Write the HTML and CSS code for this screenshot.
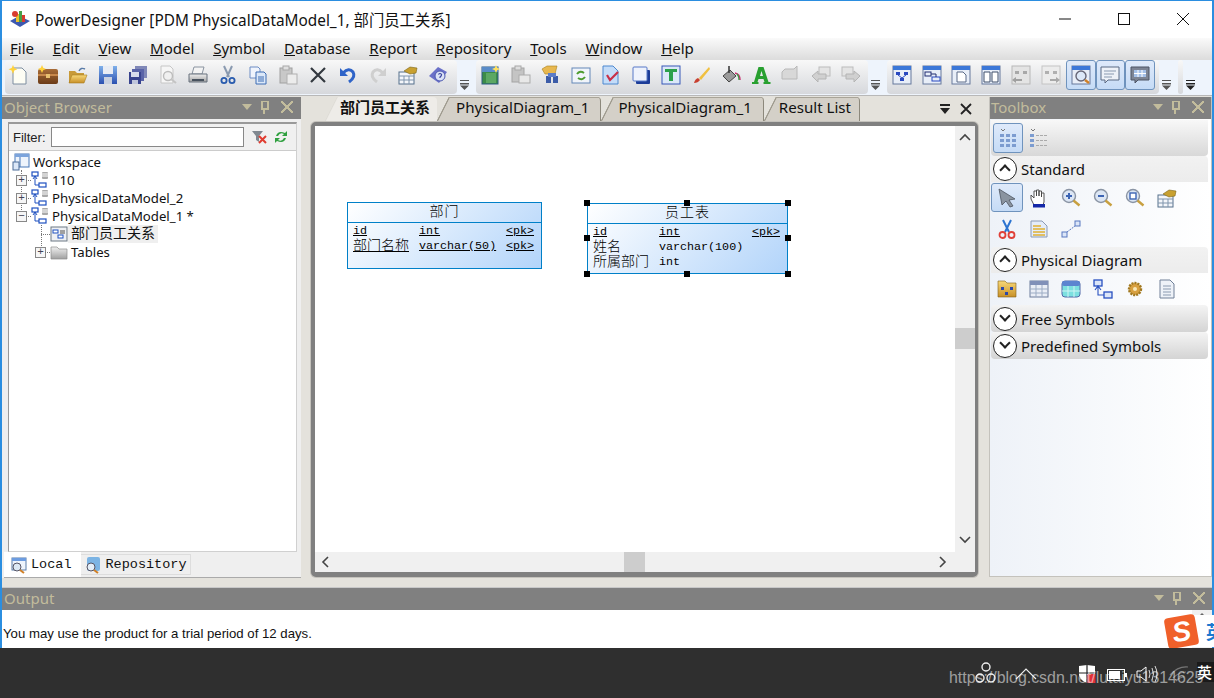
FILE: index.html
```html
<!DOCTYPE html>
<html lang="zh">
<head>
    <meta charset="UTF-8">
    <title>PowerDesigner</title>
    <link rel="stylesheet" href="styles.css">
</head>
<body>

<svg class="sprite" width="0" height="0">
    <defs>
        <linearGradient id="gBlue" x1="0" y1="0" x2="0" y2="1"><stop offset="0" stop-color="#7fb0ea"/><stop offset="1" stop-color="#2b50b0"/></linearGradient>
        <linearGradient id="gGold" x1="0" y1="0" x2="0" y2="1"><stop offset="0" stop-color="#f8d878"/><stop offset="1" stop-color="#c89028"/></linearGradient>
        <linearGradient id="gGrey" x1="0" y1="0" x2="0" y2="1"><stop offset="0" stop-color="#f0f0f0"/><stop offset="1" stop-color="#a0a0a0"/></linearGradient>
        <linearGradient id="gBrown" x1="0" y1="0" x2="0" y2="1"><stop offset="0" stop-color="#a86c38"/><stop offset="1" stop-color="#6c3c18"/></linearGradient>

        <symbol id="i-new" viewBox="0 0 20 20"><path d="M5 3h9l4 4v12H5z" fill="#fdfdf4" stroke="#7d8da0"/><path d="M5 0l1.300 3 3 1.300-3 1.300L5 9 3.700 5.600 .5 4.300l3.200-1.300z" fill="#ffd23c"/></symbol>
        <symbol id="i-case" viewBox="0 0 20 20"><rect x="0" y="4" width="20" height="15" rx="2" fill="url(#gBrown)"/><rect x="0" y="9" width="20" height="2" fill="#c8884c"/><rect x="8" y="9" width="4" height="4" fill="#e8c070"/><path d="M4 0l1.200 2.800 2.800 1.200-2.800 1.200L4 8 2.800 5.200 0 4l2.800-1.200z" fill="#ffd23c"/></symbol>
        <symbol id="i-open" viewBox="0 0 20 20"><path d="M1 6h6l2 2h7v10H1z" fill="#c89a38"/><path d="M1 18l3-8h15l-3 8z" fill="url(#gGold)" stroke="#a87c20" stroke-width=".6"/><path d="M11 6q2-4 6-2" fill="none" stroke="#5a7ca8" stroke-width="1.400"/></symbol>
        <symbol id="i-save" viewBox="0 0 20 20"><rect x="1" y="1" width="18" height="18" fill="url(#gBlue)"/><rect x="5" y="1" width="10" height="8" fill="#e8ecf4"/><rect x="6" y="12" width="8" height="7" fill="#c8d0e0"/></symbol>
        <symbol id="i-saveall" viewBox="0 0 20 20"><rect x="7" y="1" width="12" height="12" fill="#8088b8"/><rect x="4" y="4" width="12" height="12" fill="#5a64a8"/><rect x="1" y="7" width="12" height="12" fill="#39448f"/><rect x="3" y="7" width="8" height="5" fill="#d8dcec"/><rect x="4" y="15" width="6" height="4" fill="#c0c6dc"/></symbol>
        <symbol id="i-preview" viewBox="0 0 20 20"><path d="M3 1h9l3 3v14H3z" fill="#f6f6f6" stroke="#c6c6c6"/><circle cx="10" cy="11" r="4.500" fill="#f0f0f0" stroke="#bcbcbc" stroke-width="1.400"/><path d="M13 14l5 4" stroke="#c4c4c4" stroke-width="2"/></symbol>
        <symbol id="i-print" viewBox="0 0 20 20"><path d="M6 2h10l-2 7H4z" fill="#f4f4f4" stroke="#8a94a0"/><path d="M1 9h18v8H1z" fill="url(#gGrey)" stroke="#66707c"/><rect x="4" y="14" width="12" height="2" fill="#48525e"/></symbol>
        <symbol id="i-cut" viewBox="0 0 20 20"><path d="M6 1l5 11M14 1L9 12" stroke="#8a9ab0" stroke-width="2"/><circle cx="6" cy="15.500" r="2.600" fill="none" stroke="#2a5cae" stroke-width="1.800"/><circle cx="14" cy="15.500" r="2.600" fill="none" stroke="#2a5cae" stroke-width="1.800"/></symbol>
        <symbol id="i-copy" viewBox="0 0 20 20"><path d="M2 2h8l2 2v9H2z" fill="#f0f4fc" stroke="#6c8cc4"/><path d="M8 7h8l2 2v10H8z" fill="#dce8f8" stroke="#3c6cb4"/><path d="M10 12h6M10 14h6M10 16h6" stroke="#3c6cb4"/></symbol>
        <symbol id="i-paste" viewBox="0 0 20 20"><rect x="2" y="3" width="12" height="15" fill="#c8c8c8" stroke="#a0a0a0"/><rect x="5" y="1" width="6" height="4" fill="#e0e0e0" stroke="#a8a8a8"/><rect x="9" y="9" width="10" height="10" fill="#ececec" stroke="#b0b0b0"/></symbol>
        <symbol id="i-del" viewBox="0 0 20 20"><path d="M3 3l14 14M17 3L3 17" stroke="#33383f" stroke-width="2.200"/></symbol>
        <symbol id="i-undo" viewBox="0 0 20 20"><path d="M5 8q6-6 10-1 3 5-4 10" fill="none" stroke="#2f64c8" stroke-width="3"/><path d="M2 3v8h8z" fill="#2f64c8"/></symbol>
        <symbol id="i-redo" viewBox="0 0 20 20"><path d="M15 8q-6-6-10-1-3 5 4 10" fill="none" stroke="#cfcfcf" stroke-width="3"/><path d="M18 3v8h-8z" fill="#cfcfcf"/></symbol>
        <symbol id="i-props" viewBox="0 0 20 20"><rect x="1" y="7" width="15" height="12" fill="#f4f6fa" stroke="#56708c"/><path d="M1 11h15M6 11v8M11 11v8M1 15h15" stroke="#7e94ac"/><path d="M6 6l6-4 7 1-1 5-6 1z" fill="#c8a030" stroke="#7c6418" stroke-width=".6"/></symbol>
        <symbol id="i-help" viewBox="0 0 20 20"><path d="M1 11l9-9 9 5-8 11z" fill="#6a70c8"/><circle cx="12" cy="11" r="5" fill="#dbe2f6" stroke="#4c58b0"/><path d="M10.400 9.500q1.600-2 3.200 0 0 1.500-1.600 2.500v1" fill="none" stroke="#3c48a0" stroke-width="1.200"/></symbol>

        <symbol id="i-entity" viewBox="0 0 20 20"><rect x="1" y="2" width="16" height="17" fill="#3c8c48" stroke="#2c5a84"/><rect x="1" y="2" width="16" height="5" fill="#5a8cc8"/><rect x="5" y="8" width="10" height="10" fill="#5ca864"/><path d="M15 0l1.200 2.800L19 4l-2.800 1.200L15 8l-1.200-2.800L11 4l2.800-1.200z" fill="#ffe060"/></symbol>
        <symbol id="i-paste2" viewBox="0 0 20 20"><rect x="1" y="3" width="12" height="14" fill="#c4c4c4" stroke="#a4a4a4"/><rect x="4" y="1" width="6" height="4" fill="#dedede" stroke="#a8a8a8"/><rect x="8" y="10" width="11" height="8" fill="#e8e8e8" stroke="#ababab"/></symbol>
        <symbol id="i-find" viewBox="0 0 20 20"><path d="M1 4l5-3h10l-2 8H4z" fill="#e8b850" stroke="#a8801c" stroke-width=".6"/><rect x="5" y="11" width="5" height="7" fill="#3c5ca8"/><rect x="12" y="11" width="5" height="7" fill="#3c5ca8"/><rect x="7" y="8" width="8" height="4" fill="#5c7cc8"/></symbol>
        <symbol id="i-refresh" viewBox="0 0 20 20"><rect x="1" y="3" width="18" height="15" fill="#f0f4fa" stroke="#6488b8"/><path d="M6 9q3-4 7-1M14 12q-3 4-7 1" fill="none" stroke="#4c9c30" stroke-width="2"/></symbol>
        <symbol id="i-check" viewBox="0 0 20 20"><path d="M2 1h10l5 5v13H2z" fill="#c4dcf8" stroke="#4c88d0"/><path d="M6 10l3 5 8-8" fill="none" stroke="#c83048" stroke-width="2.200"/></symbol>
        <symbol id="i-shadow" viewBox="0 0 20 20"><rect x="5" y="5" width="14" height="14" rx="1" fill="#1c3c98"/><rect x="2" y="2" width="14" height="14" rx="1" fill="#eef2fc" stroke="#5678c8"/></symbol>
        <symbol id="i-text" viewBox="0 0 20 20"><rect x="1" y="1" width="18" height="18" fill="#dce8f8" stroke="#3858b8"/><path d="M4 4h12v3h-4v9h-4V7H4z" fill="#2ca04c"/></symbol>
        <symbol id="i-brush" viewBox="0 0 20 20"><path d="M18 2L8 13l2 2L19 4z" fill="#f0c040"/><path d="M7 13q-3 1-4 5 4 0 6-3z" fill="#c84030"/></symbol>
        <symbol id="i-fill" viewBox="0 0 20 20"><path d="M2 11l7-6 6 6-7 6z" fill="#9a9a9a" stroke="#444"/><path d="M8 1v7" stroke="#333" stroke-width="1.500"/><path d="M14 8q5 1 5 7" fill="none" stroke="#c83070" stroke-width="1.500"/><path d="M16 9q2 2 2 6" fill="none" stroke="#30a040" stroke-width="1.200"/></symbol>
        <symbol id="i-font" viewBox="0 0 20 20"><path d="M7.500 2h5l5 15h2v2h-7v-2h1l-1-3H7.500l-1 3h1v2H1v-2h2zM9 11h3l-1.500-5z" fill="#28a030"/></symbol>
        <symbol id="i-g1" viewBox="0 0 20 20"><path d="M1 7l3-3h9l3-3v13H1z" fill="#d8d8d8" stroke="#b8b8b8"/></symbol>
        <symbol id="i-back" viewBox="0 0 20 20"><rect x="8" y="2" width="11" height="9" fill="#e4e4e4" stroke="#bcbcbc"/><path d="M1 11l6-5v3h8v5H7v3z" fill="#d0d0d0" stroke="#b4b4b4"/></symbol>
        <symbol id="i-fwd" viewBox="0 0 20 20"><rect x="1" y="2" width="11" height="9" fill="#e4e4e4" stroke="#bcbcbc"/><path d="M19 11l-6-5v3H5v5h8v3z" fill="#d0d0d0" stroke="#b4b4b4"/></symbol>

        <symbol id="i-win" viewBox="0 0 20 20"><rect x="1" y="1" width="18" height="18" fill="#e8eef8" stroke="#66789c"/><rect x="1" y="1" width="18" height="4" fill="#3c78d8"/></symbol>
        <symbol id="i-v1" viewBox="0 0 20 20"><use href="#i-win"/><rect x="4" y="7" width="4" height="3" fill="#2848c0"/><rect x="12" y="7" width="4" height="3" fill="#2848c0"/><rect x="8" y="13" width="4" height="3" fill="#2848c0"/><path d="M6 10l4 3 4-3" fill="none" stroke="#2848c0"/></symbol>
        <symbol id="i-v2" viewBox="0 0 20 20"><use href="#i-win"/><rect x="3" y="7" width="6" height="4" fill="none" stroke="#202c70"/><rect x="10" y="12" width="8" height="4" fill="none" stroke="#2848c0"/><path d="M9 9h5v3" fill="none" stroke="#202c70"/></symbol>
        <symbol id="i-v3" viewBox="0 0 20 20"><use href="#i-win"/><path d="M6 7h6l3 3v7H6z" fill="#fff" stroke="#5a6a88"/></symbol>
        <symbol id="i-v4" viewBox="0 0 20 20"><use href="#i-win"/><path d="M3 7h6v10H3zM11 7h6v10h-6z" fill="#fff" stroke="#40506c"/></symbol>
        <symbol id="i-v5" viewBox="0 0 20 20"><rect x="1" y="1" width="18" height="18" fill="#e4e4e4" stroke="#b8b8b8"/><rect x="4" y="6" width="4" height="3" fill="#a8a8a8"/><rect x="12" y="6" width="4" height="3" fill="#a8a8a8"/><path d="M1 15l4-3v2h6v2H5v2z" fill="#a0a0a0"/></symbol>
        <symbol id="i-v6" viewBox="0 0 20 20"><rect x="1" y="1" width="18" height="18" fill="#ececec" stroke="#c4c4c4"/><rect x="4" y="6" width="4" height="3" fill="#b0b0b0"/><rect x="12" y="6" width="4" height="3" fill="#b0b0b0"/><path d="M19 15l-4-3v2H9v2h6v2z" fill="#a8a8a8"/></symbol>
        <symbol id="i-lens" viewBox="0 0 20 20"><use href="#i-win"/><circle cx="10" cy="11" r="5" fill="#dce8f8" stroke="#667" stroke-width="1.400"/><path d="M14 15l4 3" stroke="#d08028" stroke-width="2.400"/></symbol>
        <symbol id="i-note" viewBox="0 0 20 20"><path d="M1 2h18v13H8l-3 3v-3H1z" fill="#eef2f8" stroke="#5a6a84"/><path d="M4 6h12M4 9h10M4 12h8" stroke="#8a9ab0"/></symbol>
        <symbol id="i-grid" viewBox="0 0 20 20"><path d="M1 2h18v13H8l-3 3v-3H1z" fill="#7c8494" stroke="#4c5464"/><rect x="4" y="5" width="12" height="7" fill="#a4c0e8"/><path d="M8 5v7M12 5v7M4 8.500h12" stroke="#fff"/></symbol>

        <symbol id="i-vgrid" viewBox="0 0 20 20"><path d="M3 1l2 2 2-2" stroke="#777" fill="none"/><g fill="#7c9cd0"><rect x="2" y="6" width="4" height="3"/><rect x="8" y="6" width="4" height="3"/><rect x="14" y="6" width="4" height="3"/><rect x="2" y="11" width="4" height="3"/><rect x="8" y="11" width="4" height="3"/><rect x="14" y="11" width="4" height="3"/><rect x="2" y="16" width="4" height="3"/><rect x="8" y="16" width="4" height="3"/><rect x="14" y="16" width="4" height="3"/></g></symbol>
        <symbol id="i-vlist" viewBox="0 0 20 20"><path d="M3 1l2 2 2-2" stroke="#777" fill="none"/><g fill="#7c9cd0"><rect x="2" y="6" width="4" height="3"/><rect x="2" y="11" width="4" height="3"/><rect x="2" y="16" width="4" height="3"/></g><path d="M8 7.500h11M8 12.500h11M8 17.500h11" stroke="#aaa" stroke-dasharray="3 1"/></symbol>
        <symbol id="i-arrow" viewBox="0 0 20 20"><path d="M2 1l16 10-6 1 4 6-3 1-4-6-4 4z" fill="#8a94a0" stroke="#4c5460" stroke-width=".8"/></symbol>
        <symbol id="i-hand" viewBox="0 0 20 20"><path d="M2 11V7l3 3V3h2.500v5-6h2.500v6-5h2.500v6-4H15v9l-1 3H5z" fill="#fff" stroke="#444" stroke-width=".9"/><rect x="4" y="16" width="12" height="3.500" fill="#1428a8"/></symbol>
        <symbol id="i-zin" viewBox="0 0 20 20"><circle cx="8" cy="8" r="6.500" fill="#dce6f4" stroke="#8a94a4" stroke-width="1.400"/><path d="M5 8h6M8 5v6" stroke="#3c64b4" stroke-width="2"/><path d="M12.500 12.500l6 5" stroke="#c8a040" stroke-width="2.400"/></symbol>
        <symbol id="i-zout" viewBox="0 0 20 20"><circle cx="8" cy="8" r="6.500" fill="#dce6f4" stroke="#8a94a4" stroke-width="1.400"/><path d="M5 8h6" stroke="#3c64b4" stroke-width="2"/><path d="M12.500 12.500l6 5" stroke="#c8a040" stroke-width="2.400"/></symbol>
        <symbol id="i-zfit" viewBox="0 0 20 20"><circle cx="8" cy="8" r="6.500" fill="#dce6f4" stroke="#8a94a4" stroke-width="1.400"/><rect x="5" y="5" width="6" height="6" fill="#fff" stroke="#3c64b4" stroke-width="1.400"/><path d="M12.500 12.500l6 5" stroke="#c8a040" stroke-width="2.400"/></symbol>
        <symbol id="i-rcut" viewBox="0 0 20 20"><path d="M6 1l6 12M14 1L8 13" stroke="#2c74d0" stroke-width="2"/><circle cx="5.500" cy="16" r="3" fill="none" stroke="#e04038" stroke-width="1.800"/><circle cx="14.500" cy="16" r="3" fill="none" stroke="#e04038" stroke-width="1.800"/></symbol>
        <symbol id="i-memo" viewBox="0 0 20 20"><path d="M2 2h11l5 5v11H2z" fill="#e4ecf8" stroke="#8a9ab4"/><path d="M4 7h8M4 10h12M4 13h12M4 16h12" stroke="#e0b030" stroke-width="1.600"/></symbol>
        <symbol id="i-link" viewBox="0 0 20 20"><rect x="1" y="13" width="5" height="5" fill="#dce6f8" stroke="#5878c0"/><rect x="14" y="2" width="5" height="5" fill="#dce6f8" stroke="#5878c0"/><path d="M6 13l8-6" stroke="#5878c0" stroke-dasharray="2 1"/></symbol>
        <symbol id="i-pkg" viewBox="0 0 20 20"><path d="M1 2h7l2 2h9v14H1z" fill="url(#gGold)" stroke="#806018" stroke-width=".6"/><rect x="4" y="8" width="3" height="3" fill="#2c48a8"/><rect x="13" y="8" width="3" height="3" fill="#2c48a8"/><rect x="8" y="13" width="3" height="3" fill="#2c48a8"/></symbol>
        <symbol id="i-table" viewBox="0 0 20 20"><rect x="1" y="2" width="18" height="16" fill="#eaeef6" stroke="#6c7c9c"/><rect x="1" y="2" width="18" height="4" fill="#8090b8"/><path d="M7 6v12M13 6v12M1 10h18M1 14h18" stroke="#9cacc4"/></symbol>
        <symbol id="i-view" viewBox="0 0 20 20"><rect x="1" y="2" width="18" height="16" rx="3" fill="#7ce0e0" stroke="#5068a8"/><rect x="1" y="2" width="18" height="5" rx="2" fill="#5c84d0"/><path d="M7 7v11M13 7v11M1 12h18" stroke="#d0f4f4"/></symbol>
        <symbol id="i-ref" viewBox="0 0 20 20"><rect x="1" y="1" width="8" height="6" fill="#dce6f8" stroke="#2850c0" stroke-width="1.300"/><rect x="11" y="13" width="8" height="6" fill="#dce6f8" stroke="#2850c0" stroke-width="1.300"/><path d="M5 7v9h6M2 11l3-4 3 4" fill="none" stroke="#2850c0" stroke-width="1.100"/></symbol>
        <symbol id="i-gear" viewBox="0 0 20 20"><circle cx="10" cy="10" r="6" fill="#d8a040" stroke="#a07820" stroke-dasharray="2 1" stroke-width="2.400"/><circle cx="10" cy="10" r="2" fill="#f8e8b8"/></symbol>
        <symbol id="i-doc" viewBox="0 0 20 20"><path d="M3 1h10l4 4v14H3z" fill="#eef2f8" stroke="#708098"/><path d="M6 7h8M6 10h8M6 13h8M6 16h8" stroke="#8a9ab0"/></symbol>

        <symbol id="i-model" viewBox="0 0 18 18"><rect x="1" y="1" width="6" height="4" fill="#fff" stroke="#1e50c0" stroke-width="1.200"/><rect x="8" y="12" width="7" height="4" fill="#fff" stroke="#1e50c0" stroke-width="1.200"/><path d="M4 5v9h4M2 8l2-3 2 3" fill="none" stroke="#1e50c0"/><rect x="11" y="1" width="6" height="7" rx="1" fill="#a8a8a8"/><path d="M11 3h6M11 5h6" stroke="#fff"/></symbol>
        <symbol id="i-ws" viewBox="0 0 18 18"><rect x="3" y="1" width="14" height="13" fill="#eef4fc" stroke="#4878b8"/><rect x="3" y="1" width="14" height="3" fill="#7ca4dc"/><path d="M8 4v10" stroke="#4878b8"/><rect x="1" y="9" width="6" height="8" fill="#dce8f8" stroke="#4c6c98"/></symbol>
        <symbol id="i-diag" viewBox="0 0 18 18"><rect x="1" y="2" width="16" height="14" fill="#eef0f4" stroke="#6c7884"/><rect x="3" y="5" width="5" height="3" fill="#fff" stroke="#1e50c0"/><rect x="8" y="10" width="5" height="3" fill="#fff" stroke="#1e50c0"/><rect x="10" y="5" width="5" height="4" fill="#a0a0a0"/></symbol>
        <symbol id="i-folder" viewBox="0 0 18 18"><path d="M1 4h6l2 2h8v10H1z" fill="url(#gGrey)" stroke="#8c8c8c" stroke-width=".7"/></symbol>
        <symbol id="i-tab" viewBox="0 0 18 18"><rect x="2" y="2" width="14" height="12" fill="#eef4fc" stroke="#5a7ca8"/><rect x="2" y="2" width="14" height="3" fill="#6c9ce0"/><circle cx="7" cy="11" r="4" fill="#dce8f4" stroke="#556"/><path d="M10 14l4 3" stroke="#d08028" stroke-width="2"/></symbol>
        <symbol id="i-repo" viewBox="0 0 18 18"><rect x="3" y="1" width="13" height="14" rx="2" fill="#7cb4e4"/><circle cx="7" cy="11" r="4" fill="#e4eef8" stroke="#556"/><path d="M10 14l4 3" stroke="#d08028" stroke-width="2"/></symbol>
    </defs>
</svg>

<div class="window">
    <!-- title -->
    <div class="titlebar">
        <svg class="app-icon" viewBox="0 0 20 20" width="20" height="20">
            <path d="M0 12l9-5 11 5-10 6z" fill="#3c58b0"/>
            <rect x="6" y="5" width="3" height="8" fill="#e8c030"/>
            <rect x="9" y="2" width="3" height="11" fill="#48a048"/>
            <rect x="12" y="6" width="3" height="7" fill="#d83c30"/>
            <circle cx="5" cy="5" r="3" fill="#d83c30"/>
        </svg>
        <span class="app-title">PowerDesigner [PDM PhysicalDataModel_1, 部门员工关系]</span>
        <div class="win-btns">
            <svg viewBox="0 0 12 12" width="12" height="12"><path d="M0 6h12" stroke="#111"/></svg>
            <svg viewBox="0 0 12 12" width="12" height="12"><rect x=".5" y=".5" width="11" height="11" fill="none" stroke="#111"/></svg>
            <svg viewBox="0 0 12 12" width="12" height="12"><path d="M0 0l12 12M12 0L0 12" stroke="#111"/></svg>
        </div>
    </div>

    <!-- menu -->
    <div class="menubar">
        <span><u>F</u>ile</span>
        <span><u>E</u>dit</span>
        <span><u>V</u>iew</span>
        <span><u>M</u>odel</span>
        <span><u>S</u>ymbol</span>
        <span><u>D</u>atabase</span>
        <span><u>R</u>eport</span>
        <span><u>R</u>epository</span>
        <span><u>T</u>ools</span>
        <span><u>W</u>indow</span>
        <span><u>H</u>elp</span>
    </div>

    <!-- toolbars -->
    <div class="toolbars">
        <div class="tool-group group-a">
            <i class="tool"><svg><use href="#i-new"/></svg></i>
            <i class="tool"><svg><use href="#i-case"/></svg></i>
            <i class="tool"><svg><use href="#i-open"/></svg></i>
            <i class="tool"><svg><use href="#i-save"/></svg></i>
            <i class="tool"><svg><use href="#i-saveall"/></svg></i>
            <i class="tool"><svg><use href="#i-preview"/></svg></i>
            <i class="tool"><svg><use href="#i-print"/></svg></i>
            <i class="tool"><svg><use href="#i-cut"/></svg></i>
            <i class="tool"><svg><use href="#i-copy"/></svg></i>
            <i class="tool"><svg><use href="#i-paste"/></svg></i>
            <i class="tool"><svg><use href="#i-del"/></svg></i>
            <i class="tool"><svg><use href="#i-undo"/></svg></i>
            <i class="tool"><svg><use href="#i-redo"/></svg></i>
            <i class="tool"><svg><use href="#i-props"/></svg></i>
            <i class="tool"><svg><use href="#i-help"/></svg></i>
        </div>
        <div class="grip"></div>
        <div class="tool-group group-b">
            <i class="tool"><svg><use href="#i-entity"/></svg></i>
            <i class="tool"><svg><use href="#i-paste2"/></svg></i>
            <i class="tool"><svg><use href="#i-find"/></svg></i>
            <i class="tool"><svg><use href="#i-refresh"/></svg></i>
            <i class="tool"><svg><use href="#i-check"/></svg></i>
            <i class="tool"><svg><use href="#i-shadow"/></svg></i>
            <i class="tool"><svg><use href="#i-text"/></svg></i>
            <i class="tool"><svg><use href="#i-brush"/></svg></i>
            <i class="tool"><svg><use href="#i-fill"/></svg></i>
            <i class="tool"><svg><use href="#i-font"/></svg></i>
            <i class="tool"><svg><use href="#i-g1"/></svg></i>
            <i class="tool"><svg><use href="#i-back"/></svg></i>
            <i class="tool"><svg><use href="#i-fwd"/></svg></i>
        </div>
        <div class="grip"></div>
        <div class="tool-group group-c">
            <i class="tool"><svg><use href="#i-v1"/></svg></i>
            <i class="tool"><svg><use href="#i-v2"/></svg></i>
            <i class="tool"><svg><use href="#i-v3"/></svg></i>
            <i class="tool"><svg><use href="#i-v4"/></svg></i>
            <i class="tool"><svg><use href="#i-v5"/></svg></i>
            <i class="tool"><svg><use href="#i-v6"/></svg></i>
            <i class="tool on"><svg><use href="#i-lens"/></svg></i>
            <i class="tool on"><svg><use href="#i-note"/></svg></i>
            <i class="tool on"><svg><use href="#i-grid"/></svg></i>
        </div>
        <div class="grip"></div>
        <div class="tool-group group-d"></div>
        <div class="grip dark"></div>
    </div>

    <!-- docks -->
    <div class="workspace">
        <div class="panel browser">
            <div class="caption">
                <span>Object Browser</span>
                <div class="caption-btns"><b class="tri"></b><b class="pin"></b><b class="cls"></b></div>
            </div>
            <div class="browser-body">
                <div class="filter-row">
                    <label>Filter:</label>
                    <div class="filter-input"></div>
                    <svg viewBox="0 0 16 16" width="16" height="16"><path d="M1 2h11L8 7v6L5 11V7z" fill="#808890"/><path d="M8 7l7 7M15 7l-7 7" stroke="#e03c30" stroke-width="2"/></svg>
                    <svg viewBox="0 0 16 16" width="16" height="16"><path d="M3 7q2-6 9-3l2-2v5H9l2-2q-4-2-6 2zM13 9q-2 6-9 3l-2 2V9h5l-2 2q4 2 6-2z" fill="#30a040"/></svg>
                </div>
                <div class="tree">
                    <div class="node"><svg><use href="#i-ws"/></svg><span>Workspace</span></div>
                    <div class="node lvl1"><b class="box">+</b><svg><use href="#i-model"/></svg><span>110</span></div>
                    <div class="node lvl1"><b class="box">+</b><svg><use href="#i-model"/></svg><span>PhysicalDataModel_2</span></div>
                    <div class="node lvl1"><b class="box">−</b><svg><use href="#i-model"/></svg><span>PhysicalDataModel_1 *</span></div>
                    <div class="node lvl2 leaf"><svg><use href="#i-diag"/></svg><span class="picked">部门员工关系</span></div>
                    <div class="node lvl2"><b class="box">+</b><svg><use href="#i-folder"/></svg><span>Tables</span></div>
                </div>
            </div>
            <div class="bottom-tabs">
                <div class="btab active"><svg><use href="#i-tab"/></svg>Local</div>
                <div class="btab"><svg><use href="#i-repo"/></svg>Repository</div>
            </div>
        </div>

        <div class="center">
            <div class="doc-tabs">
                <div class="doc-tab active">部门员工关系</div>
                <div class="doc-tab">PhysicalDiagram_1</div>
                <div class="doc-tab">PhysicalDiagram_1</div>
                <div class="doc-tab last">Result List</div>
                <div class="doc-tab-tools">
                    <svg viewBox="0 0 12 12" width="12" height="12"><path d="M1 1h10v2H1zM1 5h10L6 11z" fill="#222"/></svg>
                    <svg viewBox="0 0 12 12" width="12" height="12"><path d="M1 1l10 10M11 1L1 11" stroke="#222" stroke-width="1.800"/></svg>
                </div>
            </div>
            <div class="doc-frame">
                <div class="canvas-row">
                    <div class="canvas">
                        <div class="entity dept">
                            <div class="entity-name cjk">部门</div>
                            <div class="entity-cols">
                                <div class="col u"><span>id</span><span>int</span><span>&lt;pk&gt;</span></div>
                                <div class="col u"><span class="cjk">部门名称</span><span>varchar(50)</span><span>&lt;pk&gt;</span></div>
                            </div>
                        </div>
                        <div class="entity emp">
                            <div class="entity-name cjk">员工表</div>
                            <div class="entity-cols">
                                <div class="col u"><span>id</span><span>int</span><span>&lt;pk&gt;</span></div>
                                <div class="col"><span class="cjk">姓名</span><span>varchar(100)</span><span></span></div>
                                <div class="col"><span class="cjk">所属部门</span><span>int</span><span></span></div>
                            </div>
                            <b class="handle h-tl"></b><b class="handle h-tc"></b><b class="handle h-tr"></b>
                            <b class="handle h-ml"></b><b class="handle h-mr"></b>
                            <b class="handle h-bl"></b><b class="handle h-bc"></b><b class="handle h-br"></b>
                        </div>
                    </div>
                    <div class="vscroll">
                        <svg viewBox="0 0 12 8" width="12" height="8"><path d="M1 7l5-5 5 5" fill="none" stroke="#444" stroke-width="1.600"/></svg>
                        <div class="vthumb"></div>
                        <svg class="vdown" viewBox="0 0 12 8" width="12" height="8"><path d="M1 1l5 5 5-5" fill="none" stroke="#444" stroke-width="1.600"/></svg>
                    </div>
                </div>
                <div class="hscroll">
                    <svg viewBox="0 0 8 12" width="8" height="12"><path d="M7 1L2 6l5 5" fill="none" stroke="#444" stroke-width="1.600"/></svg>
                    <div class="hthumb"></div>
                    <svg viewBox="0 0 8 12" width="8" height="12"><path d="M1 1l5 5-5 5" fill="none" stroke="#444" stroke-width="1.600"/></svg>
                </div>
            </div>
        </div>

        <div class="panel toolbox">
            <div class="caption">
                <span>Toolbox</span>
                <div class="caption-btns"><b class="tri"></b><b class="pin"></b><b class="cls"></b></div>
            </div>
            <div class="toolbox-body">
                <div class="view-row">
                    <i class="tool on"><svg><use href="#i-vgrid"/></svg></i>
                    <i class="tool"><svg><use href="#i-vlist"/></svg></i>
                </div>
                <div class="section"><b class="chev up"></b>Standard</div>
                <div class="section-items">
                    <i class="tool on"><svg><use href="#i-arrow"/></svg></i>
                    <i class="tool"><svg><use href="#i-hand"/></svg></i>
                    <i class="tool"><svg><use href="#i-zin"/></svg></i>
                    <i class="tool"><svg><use href="#i-zout"/></svg></i>
                    <i class="tool"><svg><use href="#i-zfit"/></svg></i>
                    <i class="tool"><svg><use href="#i-props"/></svg></i>
                    <i class="tool"><svg><use href="#i-rcut"/></svg></i>
                    <i class="tool"><svg><use href="#i-memo"/></svg></i>
                    <i class="tool"><svg><use href="#i-link"/></svg></i>
                </div>
                <div class="section"><b class="chev up"></b>Physical Diagram</div>
                <div class="section-items physical">
                    <i class="tool"><svg><use href="#i-pkg"/></svg></i>
                    <i class="tool"><svg><use href="#i-table"/></svg></i>
                    <i class="tool"><svg><use href="#i-view"/></svg></i>
                    <i class="tool"><svg><use href="#i-ref"/></svg></i>
                    <i class="tool"><svg><use href="#i-gear"/></svg></i>
                    <i class="tool"><svg><use href="#i-doc"/></svg></i>
                </div>
                <div class="section closed"><b class="chev down"></b>Free Symbols</div>
                <div class="section closed"><b class="chev down"></b>Predefined Symbols</div>
            </div>
        </div>
    </div>

    <!-- output -->
    <div class="output">
        <div class="caption">
            <span>Output</span>
            <div class="caption-btns"><b class="tri"></b><b class="pin"></b><b class="cls"></b></div>
        </div>
        <div class="output-body">You may use the product for a trial period of 12 days.</div>
        <div class="out-scroll"></div>
        <div class="ime">
            <span class="ime-s">S</span><span class="ime-lang">英</span>
        </div>
    </div>
</div>

<!-- taskbar -->
<div class="taskbar">
    <svg class="tray" viewBox="0 0 24 28" width="24" height="28"><g fill="none" stroke="#eee" stroke-width="1.400"><circle cx="12" cy="6" r="4"/><circle cx="6" cy="17" r="4"/><circle cx="17" cy="17" r="4"/></g></svg>
    <svg class="tray" viewBox="0 0 22 12" width="22" height="12"><path d="M1 11L11 1l10 10" fill="none" stroke="#eee" stroke-width="1.200"/></svg>
    <svg class="tray" viewBox="0 0 18 20" width="18" height="20"><path d="M1 2l8-1 8 1v9q-1 5-8 8-7-3-8-8z" fill="#fff"/><path d="M9 1v18M1 9h16" stroke="#222" stroke-width="1.200"/><rect x="9.500" y="10" width="8" height="9" fill="#e03038"/></svg>
    <svg class="tray" viewBox="0 0 20 12" width="20" height="12"><rect x=".5" y=".5" width="17" height="11" fill="none" stroke="#fff"/><rect x="2" y="2" width="11" height="8" fill="#fff"/><rect x="18" y="4" width="2" height="4" fill="#fff"/></svg>
    <svg class="tray" viewBox="0 0 22 18" width="22" height="18"><path d="M1 6h4l5-4v14l-5-4H1z" fill="none" stroke="#fff"/><path d="M13 5q2 4 0 8M16 3q3 6 0 12M19 1q4 8 0 16" fill="none" stroke="#ddd"/></svg>
    <svg class="tray" viewBox="0 0 20 18" width="20" height="18"><path d="M1 10q8-9 18-8M4 13q6-6 13-6M7 16q4-4 8-4" fill="none" stroke="#777" stroke-width="1.200"/></svg>
    <span class="tray-lang">英</span>
    <span class="watermark">https://blog.csdn.net/lutaiyu1314625</span>
</div>

</body>
</html>
```

FILE: styles.css
```css
/* base */
* {
    box-sizing: border-box;
}

html, body {
    margin: 0;
    padding: 0;
    height: 698px;
    overflow: hidden;
}

body {
    width: 1214px;
    display: flex;
    flex-direction: column;
    font-family: "Noto Sans", "Noto Sans CJK SC", sans-serif;
    background: #2f2f2f;
    color: #111;
}

.sprite {
    position: absolute;
    width: 0;
    height: 0;
}

.window {
    height: 648px;
    display: flex;
    flex-direction: column;
    background: #e9e7e2;
    border: 1px solid #2b8ee0;
    border-width: 1px 2px 0 2px;
}

/* title */
.titlebar {
    height: 37px;
    flex: none;
    display: flex;
    align-items: center;
    background: #fff;
    padding-left: 8px;
    padding-bottom: 2px;
}

.app-icon {
    margin-right: 5px;
}

.app-title {
    font-size: 15.35px;
    white-space: nowrap;
}

.win-btns {
    margin-left: auto;
    display: flex;
    gap: 47px;
    padding-right: 23px;
}

/* menu */
.menubar {
    height: 22px;
    flex: none;
    display: flex;
    align-items: center;
    gap: 18.8px;
    padding-left: 8px;
    padding-bottom: 3px;
    font-size: 15px;
    background: linear-gradient(#fafafa, #dcdcdc);
}

/* toolbars */
.toolbars {
    height: 36px;
    flex: none;
    display: flex;
    background: #eef4fc;
    border-bottom: 1px solid #b8b8b8;
}

.tool-group {
    display: flex;
    height: 34px;
    align-items: center;
    border-radius: 4px;
    background: linear-gradient(#f8f8f8, #d6d8dc);
    padding-bottom: 4px;
}

.group-a {
    width: 452px;
    margin-left: 3px;
}

.group-a .tool:first-child {
    margin-left: -2px;
}

.group-b {
    width: 392px;
}

.group-c {
    width: 272px;
}

.group-c .tool {
    width: 29.8px;
}

.group-d {
    width: 5px;
}

.grip {
    width: 19px;
    flex: none;
    position: relative;
}

.grip.dark {
    width: 14px;
}

.grip::after {
    content: "";
    position: absolute;
    left: 3px;
    bottom: 5px;
    width: 9px;
    height: 7px;
    border-top: 1px solid #555;
    background: #555;
    background-clip: content-box;
    padding-top: 2px;
    clip-path: polygon(0 0, 100% 0, 100% 45%, 0 45%, 0 55%, 100% 55%, 50% 100%, 0 55%);
}

.grip.dark::after {
    background-color: #222;
    border-color: #222;
}

.tool {
    width: 30px;
    height: 30px;
    flex: none;
    display: flex;
    align-items: center;
    justify-content: center;
    border: 1px solid transparent;
    border-radius: 3px;
}

.tool svg {
    width: 20px;
    height: 20px;
}

.tool.on {
    background: linear-gradient(#dfeafa, #c5dbf6);
    border-color: #6f93bd;
}

/* docks */
.workspace {
    flex: 1;
    min-height: 0;
    display: flex;
    background: #e4e2dc;
    padding-top: 1px;
    padding-bottom: 10px;
}

.panel {
    display: flex;
    flex-direction: column;
}

.browser {
    width: 299px;
    flex: none;
    background: #efefef;
    margin-bottom: -1px;
}

.toolbox {
    width: 223px;
    flex: none;
    background: #fff;
    margin-left: 4px;
    border: 1px solid #c4c2bc;
    border-top: 0;
}

.caption {
    height: 22px;
    flex: none;
    display: flex;
    align-items: center;
    justify-content: space-between;
    background: #808080;
    color: #c2bc9c;
    font-size: 15px;
    padding: 0 7px 2px 2px;
}

.browser .caption {
    padding-right: 8px;
}

.toolbox .caption {
    padding-left: 1px;
}

.caption-btns {
    display: flex;
    align-items: center;
    gap: 9px;
}

.caption-btns b {
    display: block;
}

.tri {
    width: 0;
    height: 0;
    border: 5px solid transparent;
    border-top: 6px solid #c2bc9c;
    border-bottom: 0;
}

.pin {
    width: 8px;
    height: 9px;
    margin-right: 3px;
    margin-top: -4px;
    border: 2px solid #c2bc9c;
    border-top-width: 1px;
    border-bottom-width: 2px;
    position: relative;
}

.pin::after {
    content: "";
    position: absolute;
    left: 0;
    top: 100%;
    margin-top: 2px;
    width: 2px;
    height: 4px;
    background: #c2bc9c;
}

.cls {
    width: 12px;
    height: 12px;
    background:
        linear-gradient(45deg, transparent 44%, #c2bc9c 44%, #c2bc9c 56%, transparent 56%),
        linear-gradient(-45deg, transparent 44%, #c2bc9c 44%, #c2bc9c 56%, transparent 56%);
}

/* object browser */
.browser-body {
    flex: 1;
    margin: 3px 4px 0 6px;
    background: #fff;
    border: 1px solid #d0d0d0;
    border-top: 2px solid #999;
    border-left-color: #999;
    display: flex;
    flex-direction: column;
    min-height: 0;
}

.filter-row {
    height: 27px;
    flex: none;
    display: flex;
    align-items: center;
    background: #f0f0f0;
    border-bottom: 1px solid #ccc;
    padding-left: 4px;
    font: 13px "Liberation Sans", sans-serif;
    color: #222;
}

.filter-input {
    width: 193px;
    height: 20px;
    margin: 0 6px 0 5px;
    background: #fff;
    border: 1px solid #888;
}

.filter-row svg {
    margin-left: 1px;
    margin-right: 5px;
}

.tree {
    position: relative;
    padding-top: 2px;
    font-size: 13.2px;
}

/* dotted tree guides */
.tree::before {
    content: "";
    position: absolute;
    left: 12px;
    top: 19px;
    height: 46px;
    border-left: 1px dotted #777;
}

.tree::after {
    content: "";
    position: absolute;
    left: 32px;
    top: 74px;
    height: 27px;
    border-left: 1px dotted #777;
}

.node {
    height: 18px;
    display: flex;
    align-items: center;
    white-space: nowrap;
    padding-left: 3px;
    position: relative;
}

.node svg {
    width: 18px;
    height: 18px;
    flex: none;
    margin-right: 3px;
}

.node.lvl1 {
    padding-left: 7px;
}

.node.lvl2 {
    padding-left: 26px;
}

.node.leaf {
    padding-left: 41px;
}

.node.leaf svg {
    margin-right: 0;
}

.node.leaf::before {
    content: "";
    position: absolute;
    left: 32px;
    top: 9px;
    width: 9px;
    border-top: 1px dotted #777;
}

.box {
    width: 11px;
    height: 11px;
    flex: none;
    margin-right: 4px;
    border: 1px solid #888;
    background: #f6f6f6;
    font: 400 11px/8px "Liberation Mono", monospace;
    text-align: center;
    color: #445;
    position: relative;
    z-index: 1;
}

.box::after {
    content: "";
    position: absolute;
    left: 100%;
    top: 4px;
    width: 5px;
    border-top: 1px dotted #777;
}

.picked {
    background: #efefef;
    padding: 0 3px;
    font-size: 14px;
    height: 18px;
    line-height: 15px;
}

.bottom-tabs {
    height: 26px;
    flex: none;
    display: flex;
    align-items: flex-start;
    margin-left: 2px;
    border-bottom: 1px solid #aaa;
    font: 13.5px "Liberation Mono", "Noto Sans CJK SC", monospace;
}

.btab {
    height: 21px;
    margin-top: 2px;
    display: flex;
    align-items: center;
    gap: 4px;
    padding: 0 3px;
    border: 1px solid #ddd;
    border-left: 0;
    background: #efefef;
}

.btab.active {
    height: 25px;
    margin-top: 0;
    gap: 3px;
    padding: 0 9px 0 6px;
    background: #fff;
    border: 0;
}

.btab svg {
    width: 18px;
    height: 18px;
}

/* center document */
.center {
    flex: 1;
    min-width: 0;
    display: flex;
    flex-direction: column;
    padding-left: 10px;
    padding-right: 7px;
}

.doc-tabs {
    height: 24px;
    flex: none;
    display: flex;
    align-items: stretch;
    padding-left: 24px;
    margin-left: -10px;
    background: #e4e2dc;
}

.doc-tab {
    padding: 0 11px 0 17px;
    font-size: 15.1px;
    line-height: 21px;
    white-space: nowrap;
    color: #111;
    background:
        linear-gradient(#a8a498, #a8a498) 12px 0 / 100% 1px no-repeat,
        linear-gradient(116.6deg, transparent 10.2px, #a09c90 10.7px, #a09c90 11.5px, #d4d0c8 12px);
    border-right: 1px solid #8c887c;
    border-radius: 0 4px 0 0;
}

.doc-tab:nth-child(2) {
    padding-left: 19px;
}

.doc-tab.last {
    padding-left: 15px;
    padding-right: 8px;
}

.doc-tab.active {
    background: linear-gradient(116.6deg, transparent 10.2px, #dedcd6 11px, #eeece8 12px);
    font-weight: 700;
    font-size: 15px;
    padding: 0 7px 0 15px;
    border-right: 0;
}

.doc-tab-tools {
    margin-left: auto;
    display: flex;
    gap: 9px;
    align-items: center;
    padding-right: 6px;
}

.doc-frame {
    flex: 1;
    min-height: 0;
    display: flex;
    flex-direction: column;
    margin-top: 1px;
    background: #fff;
    border: 3px solid #808080;
    border-width: 4px 3px 5px 4px;
    border-radius: 5px;
    box-shadow: 0 0 0 1px #c4c2bc;
}

.canvas-row {
    flex: 1;
    min-height: 0;
    display: flex;
}

/* diagram symbols sit on a free canvas */
.canvas {
    flex: 1;
    position: relative;
    background: #fff;
}

.entity {
    position: absolute;
    border: 1px solid #0080c8;
    background: linear-gradient(135deg, #fff 0%, #b2d4fa 100%);
    font: 11.7px/15px "Liberation Mono", monospace;
    color: #000;
}

.dept {
    left: 32px;
    top: 76px;
    width: 195px;
    height: 67px;
}

.emp {
    left: 272px;
    top: 77px;
    width: 201px;
    height: 71px;
}

.cjk {
    font-family: "Noto Sans CJK SC", sans-serif;
    font-size: 14px;
    font-weight: 300;
    line-height: 14px;
}

.entity-name {
    height: 20px;
    display: flex;
    align-items: center;
    justify-content: center;
    letter-spacing: 1px;
    padding-bottom: 5px;
    border-bottom: 1px solid #0080c8;
}

.entity-cols {
    padding-top: 1px;
}

.col {
    height: 15px;
    display: flex;
    align-items: center;
    padding-left: 5px;
    white-space: nowrap;
}

.col span:first-child {
    width: 66px;
    flex: none;
}

.col .cjk {
    margin-top: -5px;
}

.col span:last-child {
    margin-left: auto;
    padding-right: 7px;
}

.col.u span {
    text-decoration: underline;
}

.handle {
    position: absolute;
    width: 6px;
    height: 6px;
    background: #000;
}

.h-tl { left: -4px; top: -4px; }
.h-tc { left: 96px; top: -4px; }
.h-tr { right: -4px; top: -4px; }
.h-ml { left: -4px; top: 31px; }
.h-mr { right: -4px; top: 31px; }
.h-bl { left: -4px; bottom: -4px; }
.h-bc { left: 96px; bottom: -4px; }
.h-br { right: -4px; bottom: -4px; }

.vscroll {
    width: 20px;
    flex: none;
    display: flex;
    flex-direction: column;
    align-items: center;
    padding: 7px 0 8px;
    background: #f0f0f0;
}

.vthumb {
    width: 20px;
    height: 21px;
    margin-top: 187px;
    background: #cdcdcd;
}

.vdown {
    margin-top: auto;
}

.hscroll {
    height: 20px;
    flex: none;
    display: flex;
    align-items: center;
    padding: 0 28px 0 6px;
    background: #f0f0f0;
}

.hthumb {
    width: 21px;
    height: 20px;
    margin-left: 295px;
    margin-right: auto;
    background: #cdcdcd;
}

/* toolbox */
.toolbox-body {
    flex: 1;
    padding: 1px 3px 1px 1px;
    background: linear-gradient(90deg, #eef2f8, #fff);
    font-size: 15px;
}

.view-row {
    height: 36px;
    display: flex;
    align-items: center;
    padding-left: 2px;
    background: linear-gradient(#f8f8f8, #d8d8d8);
    border-radius: 0 0 4px 4px;
}

.section {
    height: 26px;
    display: flex;
    align-items: center;
    gap: 4px;
    padding-left: 2px;
    background: linear-gradient(#f2f2f2, #ececec);
    border-radius: 4px 4px 0 0;
    white-space: nowrap;
}

.section.closed {
    height: 27px;
    background: linear-gradient(#f4f4f4, #d4d4d4);
    border-radius: 4px;
}

.chev {
    width: 24px;
    height: 24px;
    flex: none;
    border: 1px solid #222;
    border-radius: 50%;
    background: #fff;
    position: relative;
}

.chev::after {
    content: "";
    position: absolute;
    left: 7px;
    width: 6px;
    height: 6px;
    border: 2px solid #222;
    border-width: 2px 0 0 2px;
    transform: rotate(45deg);
    top: 8px;
}

.chev.down::after {
    transform: rotate(225deg);
    top: 4px;
}

.section-items {
    display: flex;
    flex-wrap: wrap;
    width: 200px;
    padding: 1px 0 4px;
    row-gap: 2px;
}

.section-items.physical {
    padding: 1px 0 2px;
}

.section-items .tool {
    width: 32px;
    height: 29px;
}

/* output */
.output {
    height: 61px;
    flex: none;
    position: relative;
    background: #fff;
    border-top: 1px solid #c8c8c8;
}

.output-body {
    padding-top: 16px;
    padding-left: 1px;
    font: 13.2px/15px "Liberation Sans", sans-serif;
    color: #111;
}

.out-scroll {
    position: absolute;
    right: 0;
    top: 22px;
    bottom: 0;
    width: 20px;
    background: #f0f0f0;
}

.out-scroll::before {
    content: "";
    position: absolute;
    left: 6px;
    top: 3px;
    border: 4px solid transparent;
    border-bottom: 4px solid #666;
    border-top: 0;
}

.ime {
    position: absolute;
    right: -2px;
    top: 27px;
    display: flex;
    align-items: center;
    height: 32px;
    background: linear-gradient(90deg, transparent 15px, #fff 15px);
}

.ime-s {
    width: 31px;
    height: 31px;
    background: #f0602a;
    color: #fff;
    font: italic 700 28px/31px "Liberation Sans", sans-serif;
    text-align: center;
    border-radius: 4px;
    transform: rotate(-10deg);
}

.ime-lang {
    color: #1c78d0;
    font-size: 18px;
    font-weight: 700;
    margin-left: 9px;
    width: 8px;
    overflow: hidden;
    white-space: nowrap;
}

/* taskbar */
.taskbar {
    flex: 1;
    position: relative;
    background: #2f2f2f;
}

.tray {
    position: absolute;
}

.tray:nth-of-type(1) { left: 974px; top: 13px; }
.tray:nth-of-type(2) { left: 1015px; top: 20px; }
.tray:nth-of-type(3) { left: 1078px; top: 16px; }
.tray:nth-of-type(4) { left: 1107px; top: 21px; }
.tray:nth-of-type(5) { left: 1136px; top: 17px; }
.tray:nth-of-type(6) { left: 1169px; top: 17px; }

.tray-lang {
    position: absolute;
    left: 1197px;
    top: 14px;
    width: 17px;
    font-size: 15px;
    font-weight: 500;
    color: #fff;
    line-height: 20px;
    background: #1a1a1a;
}

.watermark {
    position: absolute;
    left: 949px;
    top: 21px;
    font: 15.9px "Liberation Sans", sans-serif;
    color: rgba(255, 255, 255, 0.55);
    white-space: nowrap;
}
```
